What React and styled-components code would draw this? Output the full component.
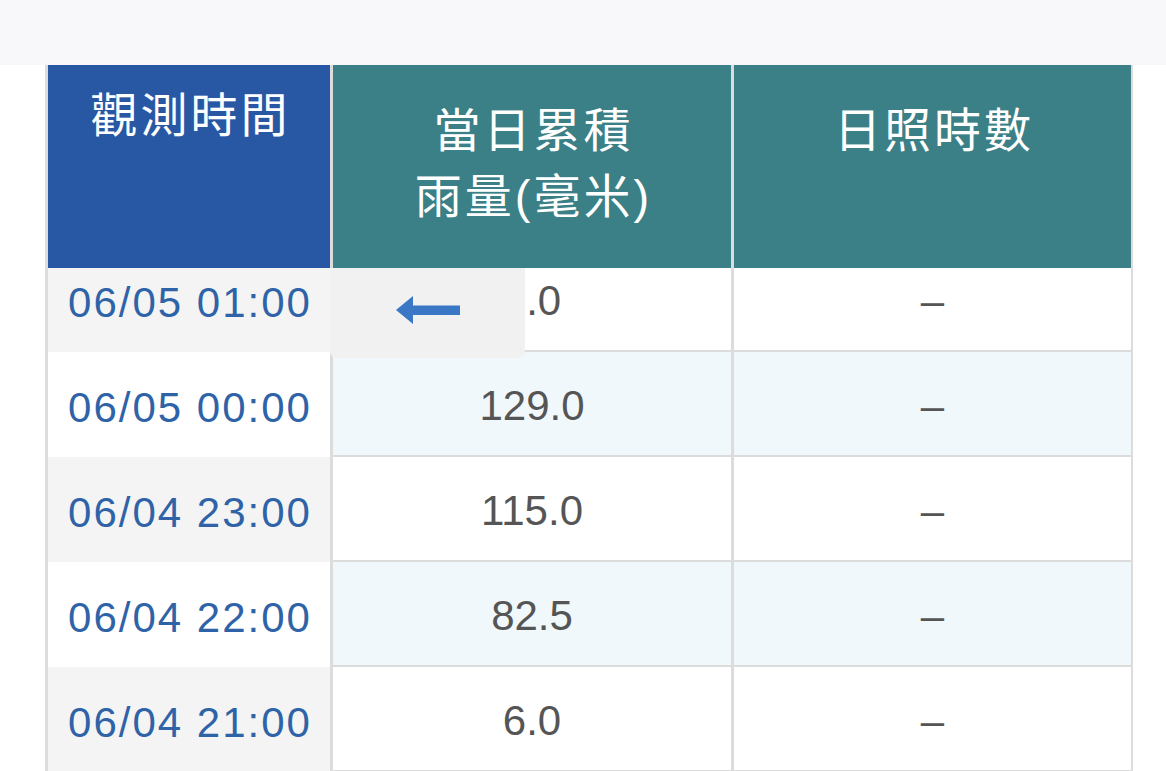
import React from 'react';
import styled, { createGlobalStyle } from 'styled-components';

const GlobalStyle = createGlobalStyle`
  html, body {
    margin: 0;
    padding: 0;
    background: #fff;
  }
  * {
    box-sizing: border-box;
  }
`;

const Page = styled.div`
  height: 100vh;
  overflow: hidden;
  font-family: "Liberation Sans", "Noto Sans CJK TC", sans-serif;
`;

const TopBar = styled.div`
  height: 65px;
  background: #f8f8fa;
`;

const Table = styled.div`
  position: relative;
  margin-left: 45px;
  width: 1088px;
  border-left: 3px solid #dcdcdc;
  border-right: 2px solid #dcdcdc;
`;

const Row = styled.div`
  display: grid;
  grid-template-columns: 282px 401px 400px;
  height: ${(p) => p.$height}px;
`;

const HeadCell = styled.div`
  height: 203px;
  padding-top: ${(p) => (p.$first ? 18 : 33)}px;
  padding-left: 3px;
  background: ${(p) => (p.$first ? '#2857a4' : '#3b7f87')};
  border-left: ${(p) => (p.$first ? 'none' : '3px solid #dcdcdc')};
  color: #fff;
  text-align: center;
  font-size: 47px;
  line-height: 66px;
  letter-spacing: 3px;
`;

const TimeCell = styled.div`
  display: flex;
  align-items: flex-end;
  justify-content: center;
  padding: 0 0 28px 2px;
  background: ${(p) => (p.$shade ? '#f4f4f4' : '#fff')};
  color: #2e63a8;
  font-size: 42px;
  line-height: 1;
  letter-spacing: 2px;
`;

const ValueCell = styled.div`
  display: flex;
  align-items: flex-end;
  justify-content: center;
  padding-bottom: 28px;
  background: ${(p) => (p.$tint ? '#f0f8fb' : '#fff')};
  border-left: 3px solid #dcdcdc;
  border-bottom: 2px solid #dcdcdc;
  color: #555;
  font-size: 42px;
  line-height: 1;
`;

// hint box that sits over the first data row
const ScrollHint = styled.div`
  position: absolute;
  top: 203px;
  left: 282px;
  width: 195px;
  height: 90px;
  display: flex;
  align-items: center;
  justify-content: center;
  padding-bottom: 6px;
  background: #f1f1f1;
  border-radius: 0 0 7px 7px;
`;

const rows = [
  { time: '06/05 01:00', rain: '1.0', sun: '–' },
  { time: '06/05 00:00', rain: '129.0', sun: '–' },
  { time: '06/04 23:00', rain: '115.0', sun: '–' },
  { time: '06/04 22:00', rain: '82.5', sun: '–' },
  { time: '06/04 21:00', rain: '6.0', sun: '–' },
];

function LeftArrow() {
  return (
    <svg width="64" height="28" viewBox="0 0 64 28">
      <path d="M0 14 L17 0 L17 9.5 L64 9.5 L64 19 L17 19 L17 28 Z" fill="#3a78c6" />
    </svg>
  );
}

export default function App() {
  return (
    <Page>
      <GlobalStyle />
      <TopBar />
      <Table>
        <Row $height={203}>
          <HeadCell $first>觀測時間</HeadCell>
          <HeadCell>
            當日累積
            <br />
            雨量(毫米)
          </HeadCell>
          <HeadCell>日照時數</HeadCell>
        </Row>
        {rows.map((r, i) => (
          <Row key={r.time} $height={i === 0 ? 84 : 105}>
            <TimeCell $shade={i % 2 === 0}>{r.time}</TimeCell>
            <ValueCell $tint={i % 2 === 1}>{r.rain}</ValueCell>
            <ValueCell $tint={i % 2 === 1}>{r.sun}</ValueCell>
          </Row>
        ))}
        <ScrollHint>
          <LeftArrow />
        </ScrollHint>
      </Table>
    </Page>
  );
}
